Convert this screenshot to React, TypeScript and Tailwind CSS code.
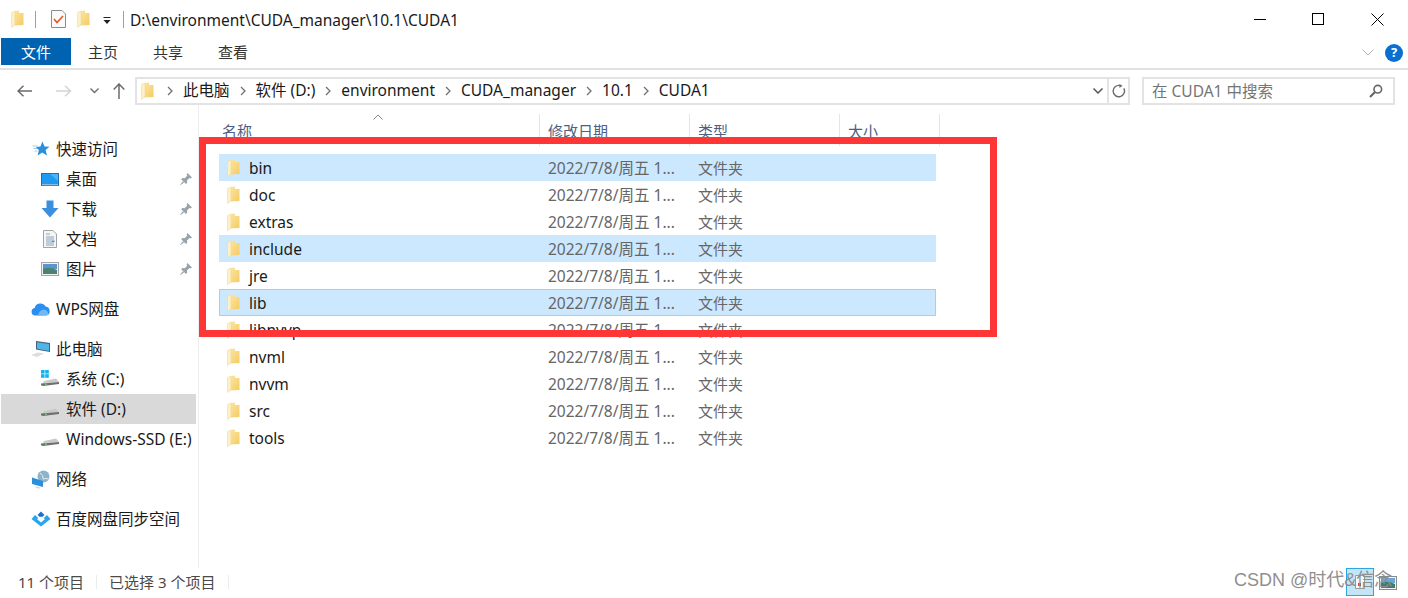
import React from 'react';

const font = "font-['Noto_Sans','Noto_Sans_CJK_SC',sans-serif]";

function FolderIcon({ className = 'w-[14px] h-[18px]' }: { className?: string }) {
  return (
    <svg viewBox="0 0 14 18" className={className}>
      <defs>
        <linearGradient id="fold" x1="0" y1="0" x2="1" y2="1">
          <stop offset="0" stopColor="#fbe6a6" />
          <stop offset="1" stopColor="#f5cb62" />
        </linearGradient>
      </defs>
      <path d="M3 1 L8 0.5 L8 3 L12.5 3 L12.5 15 L3 15.5 Z" fill="url(#fold)" />
      <path d="M0.5 2.5 L4 1 L4 15 L0.5 17.5 Z" fill="#fdf0c4" stroke="#eed78f" strokeWidth="0.5" />
    </svg>
  );
}

function Pin() {
  return (
    <svg viewBox="0 0 14 14" className="w-[14px] h-[14px]">
      <path d="M8.5 1 L13 5.5 L11.5 6.5 L10.5 6 L8 8.5 L8.2 10.8 L7 12 L2.2 7.2 L3.4 6 L5.7 6.2 L8.2 3.7 L7.6 2.6 Z M3.8 9.2 L5 10.4 L1.2 13.2 L1 13 Z" fill="#98a3ab" />
    </svg>
  );
}

function Drive({ win = false }: { win?: boolean }) {
  return (
    <svg viewBox="0 0 20 18" className="w-[20px] h-[18px]">
      {win && (
        <g fill="#12b4ee">
          <rect x="1" y="0" width="3.6" height="3.6" />
          <rect x="5.2" y="0" width="3.6" height="3.6" />
          <rect x="1" y="4.2" width="3.6" height="3.6" />
          <rect x="5.2" y="4.2" width="3.6" height="3.6" />
        </g>
      )}
      <path d="M4 11 L16 8.5 L19 12 L3 13 Z" fill="#c9c9c9" />
      <path d="M1 13.5 L19 12 L19 14 L3 16 L1 15.2 Z" fill="#6f6f6f" />
      <rect x="5" y="13.6" width="2" height="1" fill="#7ee07e" />
    </svg>
  );
}

function NavIcon({ name }: { name: string }) {
  if (name === 'star')
    return (
      <svg viewBox="0 0 18 16" className="w-[18px] h-[16px]">
        <path d="M10.5 0.5 L12.5 5.5 L17.5 5.8 L13.6 9 L15 14.5 L10.2 11.6 L5.6 14.5 L6.9 9 L3.8 6.2 L8.4 5.6 Z" fill="#2a8edb" />
        <path d="M0.5 5 H6 M1.5 7.5 H5 M2.5 10 H5.5" stroke="#9fd0f2" strokeWidth="1" />
      </svg>
    );
  if (name === 'desktop')
    return (
      <svg viewBox="0 0 18 13" className="w-[18px] h-[13px]">
        <rect x="0" y="0" width="18" height="13" fill="#1f6fb5" />
        <rect x="1" y="1" width="16" height="10" fill="#1e9bf0" />
        <path d="M9 1 H17 V8 Z" fill="#4db4f5" />
        <rect x="1" y="11.4" width="16" height="0.8" fill="#d7edfb" />
      </svg>
    );
  if (name === 'download')
    return (
      <svg viewBox="0 0 18 18" className="w-[18px] h-[18px]">
        <path d="M5.5 0.5 H12.5 V8 H17.5 L9 17.5 L0.5 8 H5.5 Z" fill="#3a8fdf" />
      </svg>
    );
  if (name === 'doc')
    return (
      <svg viewBox="0 0 14 18" className="w-[14px] h-[18px]">
        <path d="M0.5 0.5 H10 L13.5 4 V17.5 H0.5 Z" fill="#f5f5f5" stroke="#a3a3a3" />
        <path d="M3 4 H7 M3 7 H11 M3 9 H11 M3 11 H8 M3 13 H11 M3 15 H11" stroke="#8aa4bb" strokeWidth="1" />
        <rect x="8.5" y="10.5" width="3" height="1.5" fill="#3a8fdf" />
      </svg>
    );
  if (name === 'pictures')
    return (
      <svg viewBox="0 0 18 14" className="w-[18px] h-[14px]">
        <rect x="0.5" y="0.5" width="17" height="13" fill="#f2f2f2" stroke="#a5a5a5" />
        <rect x="2" y="2" width="14" height="5" fill="#5b95cf" />
        <path d="M2 7 Q8 4 16 8 V12 H2 Z" fill="#4b8372" />
      </svg>
    );
  if (name === 'wps')
    return (
      <svg viewBox="0 0 20 14" className="w-[20px] h-[14px]">
        <path d="M4 13.5 A3.8 3.8 0 0 1 3.6 6 A6 6 0 0 1 14.6 4.6 A4.6 4.6 0 0 1 15.6 13.5 Z" fill="#2c8ff0" />
        <path d="M7 13.5 Q8 8 13 7.5 Q17 8 17.5 13 Z" fill="#6fb8f7" />
      </svg>
    );
  if (name === 'pc')
    return (
      <svg viewBox="0 0 22 18" className="w-[22px] h-[18px]">
        <path d="M6 1 L20 3 V12 L6 9.5 Z" fill="#4a5f70" />
        <path d="M7 2.2 L19 4 V11 L7 8.8 Z" fill="#4fb3ec" />
        <path d="M1 15 L8 12.5 L14 13.5 L7 17 Z" fill="#dcdcdc" />
      </svg>
    );
  if (name === 'network')
    return (
      <svg viewBox="0 0 20 19" className="w-[20px] h-[19px]">
        <circle cx="12.5" cy="6.5" r="6" fill="#8fb4c9" />
        <path d="M9 3 Q13 5 12 9 Q15 8 17.5 9" stroke="#dbe9f1" fill="none" />
        <path d="M1 7.5 L12 11 V17 L1 14 Z" fill="#2c8fdc" />
        <path d="M3 16 L10 18 L7 18.5 Z" fill="#c7c7c7" />
      </svg>
    );
  if (name === 'baidu')
    return (
      <svg viewBox="0 0 20 16" className="w-[20px] h-[16px]">
        <path d="M10 0.5 L13.5 4 L10 7 L6.5 4 Z" fill="#1e6fc9" />
        <path d="M4 4 L10 9.5 L16 4 L19.5 8 L10 15.5 L0.5 8 Z" fill="#27a6ef" />
        <path d="M6 8 L10 11.5 L14 8 L10 5.5 Z" fill="#ffffff" />
      </svg>
    );
  if (name === 'win') return <Drive win />;
  return <Drive />;
}

type NavItem = { label: string; icon: string; sub?: boolean; pin?: boolean; gap?: boolean; active?: boolean };

const navItems: NavItem[] = [
  { label: '快速访问', icon: 'star' },
  { label: '桌面', icon: 'desktop', sub: true, pin: true },
  { label: '下载', icon: 'download', sub: true, pin: true },
  { label: '文档', icon: 'doc', sub: true, pin: true },
  { label: '图片', icon: 'pictures', sub: true, pin: true },
  { label: 'WPS网盘', icon: 'wps', gap: true },
  { label: '此电脑', icon: 'pc', gap: true },
  { label: '系统 (C:)', icon: 'win', sub: true },
  { label: '软件 (D:)', icon: 'drive', sub: true, active: true },
  { label: 'Windows-SSD (E:)', icon: 'drive', sub: true },
  { label: '网络', icon: 'network', gap: true },
  { label: '百度网盘同步空间', icon: 'baidu', gap: true },
];

const files = [
  { name: 'bin', selected: true },
  { name: 'doc' },
  { name: 'extras' },
  { name: 'include', selected: true },
  { name: 'jre' },
  { name: 'lib', selected: true, focused: true },
  { name: 'libnvvp' },
  { name: 'nvml' },
  { name: 'nvvm' },
  { name: 'src' },
  { name: 'tools' },
];

const crumbs = ['此电脑', '软件 (D:)', 'environment', 'CUDA_manager', '10.1', 'CUDA1'];

function SmallChevron() {
  return (
    <svg viewBox="0 0 6 10" className="w-[6px] h-[10px] mx-[10px] shrink-0">
      <path d="M1 1 L5 5 L1 9" stroke="#707070" strokeWidth="1.3" fill="none" />
    </svg>
  );
}

export default function App() {
  return (
    <div className={`relative flex flex-col w-[1408px] h-[598px] overflow-hidden bg-white text-[#1a1a1a] ${font}`}>
      {/* Title bar */}
      <header className="flex items-center h-[38px] shrink-0">
        <div className="ml-[11px]">
          <FolderIcon />
        </div>
        <div className="ml-[10px] w-px h-[17px] bg-[#a0a0a0]" />
        <svg viewBox="0 0 15 18" className="ml-[15px] w-[15px] h-[18px]">
          <path d="M0.5 0.5 H11 L14.5 4 V17.5 H0.5 Z" fill="#fafafa" stroke="#8c8c8c" />
          <path d="M3 9 L6 12.5 L12 6" stroke="#e8551f" strokeWidth="1.6" fill="none" />
        </svg>
        <div className="ml-[11px]">
          <FolderIcon />
        </div>
        <svg viewBox="0 0 8 8" className="ml-[12px] mt-[4px] w-[8px] h-[8px]">
          <path d="M0.5 0.5 H7.5" stroke="#222" />
          <path d="M0.5 3 H7.5 L4 7 Z" fill="#222" />
        </svg>
        <div className="ml-[12px] w-px h-[17px] bg-[#a0a0a0]" />
        <div className="ml-[6px] pt-[3px] text-[15.5px] whitespace-nowrap">D:\environment\CUDA_manager\10.1\CUDA1</div>
        <div className="ml-auto flex items-center">
          <svg viewBox="0 0 12 12" className="w-[12px] h-[12px] mr-[46px]">
            <path d="M0 6.5 H12" stroke="#000" />
          </svg>
          <svg viewBox="0 0 12 12" className="w-[12px] h-[12px] mr-[47px]">
            <rect x="0.5" y="0.5" width="11" height="11" fill="none" stroke="#000" />
          </svg>
          <svg viewBox="0 0 13 13" className="w-[13px] h-[13px] mr-[24px]">
            <path d="M0.5 0.5 L12.5 12.5 M12.5 0.5 L0.5 12.5" stroke="#000" />
          </svg>
        </div>
      </header>

      {/* Ribbon tabs */}
      <nav className="flex items-start h-[32px] shrink-0 pl-px border-b-2 border-[#e2e2e2] text-[15px]">
        <div className="flex items-center justify-center w-[70px] h-[27px] pt-[2px] bg-[#0063b1] text-white">文件</div>
        <div className="flex items-center h-[27px] pt-[2px] ml-[17px] text-[#333]">主页</div>
        <div className="flex items-center h-[27px] pt-[2px] ml-[35px] text-[#333]">共享</div>
        <div className="flex items-center h-[27px] pt-[2px] ml-[35px] text-[#333]">查看</div>
        <div className="ml-auto flex items-center h-[27px] mt-px">
          <svg viewBox="0 0 12 7" className="w-[12px] h-[7px] mr-[11px]">
            <path d="M0.5 0.5 L6 6 L11.5 0.5" stroke="#b4b4b4" fill="none" />
          </svg>
          <div className="flex items-center justify-center w-[18px] h-[18px] mr-[5px] rounded-full bg-[#0a6fd0] text-white text-[13px] font-bold">
            ?
          </div>
        </div>
      </nav>

      {/* Address row */}
      <div className="flex items-start h-[35px] shrink-0 pt-[7px]">
        <div className="flex items-center h-[27px] w-[135px] shrink-0 pl-[17px]">
          <svg viewBox="0 0 16 12" className="w-[16px] h-[12px]">
            <path d="M1 6 H15 M6.5 0.7 L1 6 L6.5 11.3" stroke="#6b6b6b" strokeWidth="1.5" fill="none" />
          </svg>
          <svg viewBox="0 0 16 12" className="ml-[23px] w-[16px] h-[12px]">
            <path d="M0 6 H14.5 M9 0.7 L14.5 6 L9 11.3" stroke="#d4d4d4" strokeWidth="1.5" fill="none" />
          </svg>
          <svg viewBox="0 0 9 6" className="ml-[18px] w-[9px] h-[6px]">
            <path d="M0.5 0.5 L4.5 4.5 L8.5 0.5" stroke="#6e6e6e" strokeWidth="1.4" fill="none" />
          </svg>
          <svg viewBox="0 0 12 16" className="ml-[14px] w-[12px] h-[16px]">
            <path d="M6 16 V1 M0.7 6.5 L6 1 L11.3 6.5" stroke="#6b6b6b" strokeWidth="1.5" fill="none" />
          </svg>
        </div>
        <div className="flex items-center w-[995px] h-[28px] border-2 border-[#e3e3e3] text-[15.5px] shrink-0">
          <div className="ml-[4px] mr-[2px]">
            <FolderIcon />
          </div>
          <SmallChevron />
          {crumbs.map((crumb, i) => (
            <React.Fragment key={crumb}>
              <span className="whitespace-nowrap">{crumb}</span>
              {i < crumbs.length - 1 && <SmallChevron />}
            </React.Fragment>
          ))}
          <div className="ml-auto flex items-center h-full">
            <svg viewBox="0 0 10 6" className="w-[10px] h-[6px] mr-[4px]">
              <path d="M0.5 0.5 L5 5 L9.5 0.5" stroke="#555" strokeWidth="1.5" fill="none" />
            </svg>
            <div className="flex items-center justify-center w-[21px] h-full border-l-2 border-[#e3e3e3]">
              <svg viewBox="0 0 16 16" className="w-[14px] h-[14px]">
                <path d="M13.5 5 A6.5 6.5 0 1 1 9 1.7" stroke="#6a6a6a" strokeWidth="1.6" fill="none" />
                <path d="M8.5 0 L12 2 L8.5 4.5 Z" fill="#6a6a6a" />
              </svg>
            </div>
          </div>
        </div>
        <div className="flex items-center justify-between w-[253px] h-[28px] ml-[12px] pl-[8px] pr-[10px] border-2 border-[#e3e3e3] text-[15.5px] text-[#757575] shrink-0">
          <span className="whitespace-nowrap pt-[2px]">在 CUDA1 中搜索</span>
          <svg viewBox="0 0 14 14" className="w-[14px] h-[14px]">
            <circle cx="8.8" cy="5.2" r="3.8" stroke="#666" strokeWidth="1.6" fill="none" />
            <path d="M6 8 L1 13" stroke="#666" strokeWidth="2.2" />
          </svg>
        </div>
      </div>

      {/* Body */}
      <div className="flex flex-1 min-h-0">
        <aside className="w-[198px] shrink-0 pt-[29px] pl-px text-[15.5px]">
          {navItems.map((item) => (
            <div
              key={item.label}
              className={`flex items-center h-[30px] w-[195px] ${item.gap ? 'mt-[10px]' : ''} ${item.active ? 'bg-[#d9d9d9]' : ''}`}
            >
              <div className={`flex items-center justify-center shrink-0 w-[24px] ${item.sub ? 'ml-[37px] mr-[4px]' : 'ml-[28px] mr-[3px]'}`}>
                <NavIcon name={item.icon} />
              </div>
              <span className="whitespace-nowrap pt-[2px]">{item.label}</span>
              {item.pin && (
                <div className="ml-auto mr-[3px]">
                  <Pin />
                </div>
              )}
            </div>
          ))}
        </aside>

        <main className="flex-1 min-w-0 flex flex-col">
          <div className="flex-1 min-h-0 border-l border-[#eeeeee] h-[463px] mb-[30px]">
            {/* Column header */}
            <div className="relative flex h-[32px] mt-[9px] text-[15px] text-[#4d6082]">
              <svg viewBox="0 0 10 6" className="absolute left-[174px] top-[0px] w-[10px] h-[6px]">
                <path d="M0.5 5.5 L5 1 L9.5 5.5" stroke="#888" fill="none" />
              </svg>
              <div className="flex items-center w-[341px] pl-[23px] pt-[3px] border-r border-[#e5e5e5]">名称</div>
              <div className="flex items-center w-[150px] pl-[8px] pt-[3px] border-r border-[#e5e5e5]">修改日期</div>
              <div className="flex items-center w-[150px] pl-[8px] pt-[3px] border-r border-[#e5e5e5]">类型</div>
              <div className="flex items-center w-[100px] pl-[8px] pt-[3px] border-r border-[#e5e5e5]">大小</div>
            </div>
            {/* File rows */}
            <div className="mt-[8px] ml-[20px] w-[717px]">
              {files.map((file) => (
                <div
                  key={file.name}
                  className={`flex items-center h-[27px] ${file.selected ? 'bg-[#cce8ff]' : ''} ${file.focused ? 'border border-[#99d1ff]' : ''}`}
                >
                  <div className={`flex items-center shrink-0 text-[15.5px] ${file.focused ? 'w-[328px] pl-[7px]' : 'w-[329px] pl-[8px]'}`}>
                    <FolderIcon />
                    <span className="ml-[8px] pt-[2px]">{file.name}</span>
                  </div>
                  <div className="w-[150px] shrink-0 pt-[2px] whitespace-nowrap text-[15.5px] text-[#666666]">2022/7/8/周五 1...</div>
                  <div className="whitespace-nowrap pt-[2px] text-[15px] text-[#666666]">文件夹</div>
                </div>
              ))}
            </div>
          </div>
        </main>
      </div>

      {/* Status bar */}
      <footer className="absolute left-0 bottom-0 flex items-center w-full h-[30px] pb-[2px] pl-[18px] text-[15px] text-[#4a4a4a]">
        <span className="whitespace-nowrap">11 个项目</span>
        <div className="w-px h-[14px] ml-[12px] bg-[#ececec]" />
        <span className="ml-[12px] whitespace-nowrap">已选择 3 个项目</span>
        <div className="w-px h-[14px] ml-[13px] bg-[#ececec]" />
      </footer>

      {/* Red annotation box */}
      <div className="absolute left-[199px] top-[137px] w-[798px] h-[200px] border-[7px] border-[#ff3636]" />

      {/* Drag ghost and watermark */}
      <div className="absolute left-[1346px] top-[568px] flex items-center justify-center w-[28px] h-[28px] bg-[#c4e4f7] border border-[#2ca5e0]">
        <svg viewBox="0 0 10 14" className="w-[10px] h-[14px]">
          <path d="M0.5 0.5 H9.5 V13.5 H0.5 Z" fill="#fafafa" stroke="#999" />
          <rect x="3" y="8" width="3" height="3" fill="#d8401f" />
        </svg>
      </div>
      <svg viewBox="0 0 18 14" className="absolute left-[1379px] top-[576px] w-[18px] h-[14px]">
        <rect x="0.5" y="0.5" width="17" height="13" fill="#f2f2f2" stroke="#8a8a8a" />
        <rect x="2" y="2" width="14" height="5" fill="#6aa7d6" />
        <path d="M2 7 Q8 4 16 8 V12 H2 Z" fill="#3f7c6a" />
      </svg>
      <div className="absolute left-[1234px] top-[567px] text-[18px] text-[#8f8f8f] whitespace-nowrap font-['Liberation_Sans','Noto_Sans_CJK_SC',sans-serif]">CSDN @时代&信念</div>
    </div>
  );
}
